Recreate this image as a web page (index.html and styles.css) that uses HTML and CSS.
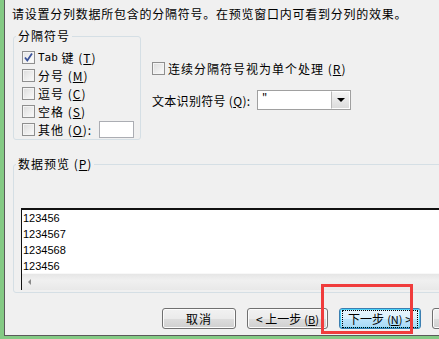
FILE: index.html
```html
<!DOCTYPE html>
<html lang="zh-CN">
<head>
    <meta charset="UTF-8">
    <title>文本分列向导</title>
    <link rel="stylesheet" href="styles.css">
</head>
<body>
    <div class="frame">
        <div class="panel">
            <p class="intro">请设置分列数据所包含的分隔符号。在预览窗口内可看到分列的效果。</p>

            <div class="options">
                <fieldset class="group">
                    <legend>分隔符号</legend>
                    <div class="checks">
                        <label class="check"><span class="box checked"><svg width="11" height="11" viewBox="0 0 11 11"><path d="M2 5.5 L4.3 8.5 L9 1.5" fill="none" stroke="#3b539a" stroke-width="1.8"/></svg></span><span class="mono">Tab</span>&nbsp;键 (<u>T</u>)</label>
                        <label class="check"><span class="box"></span>分号 (<u>M</u>)</label>
                        <label class="check"><span class="box"></span>逗号 (<u>C</u>)</label>
                        <label class="check"><span class="box"></span>空格 (<u>S</u>)</label>
                        <label class="check"><span class="box"></span>其他 (<u>O</u>):<span class="other-input"></span></label>
                    </div>
                </fieldset>

                <div class="side">
                    <label class="check"><span class="box"></span>连续分隔符号视为单个处理 (<u>R</u>)</label>
                    <div class="qualifier">
                        <span class="qualifier-label">文本识别符号 (<u>Q</u>):</span>
                        <div class="combo">
                            <span class="combo-value">"</span>
                            <span class="combo-btn"><span class="arrow"></span></span>
                        </div>
                    </div>
                </div>
            </div>

            <fieldset class="preview">
                <legend>数据预览 (<u>P</u>)</legend>
                <div class="list">
                    <div class="rows">
                        <div class="row">123456</div>
                        <div class="row">1234567</div>
                        <div class="row">1234568</div>
                        <div class="row">123456</div>
                    </div>
                    <div class="hscroll"><span class="left-arrow"></span></div>
                </div>
            </fieldset>

            <div class="buttons">
                <button class="btn btn-cancel">取消</button>
                <button class="btn btn-back">&lt; 上一步<span class="key">(<u>B</u>)</span></button>
                <button class="btn btn-next focused"><span class="focus-rect">下一步<span class="key">(<u>N</u>)</span> &gt;</span></button>
                <button class="btn btn-finish"></button>
            </div>
        </div>
        <div class="highlight"></div>
    </div>
</body>
</html>
```

FILE: styles.css
```css
* {
    box-sizing: border-box;
}

body {
    margin: 0;
    font-family: "Noto Sans CJK SC", "DejaVu Sans", sans-serif;
    font-size: 12px;
    letter-spacing: 1px;
    color: #000;
    background: #f0f0f0;
}

.frame {
    position: relative;
    width: 439px;
    height: 339px;
    border-left: 4px solid #84ca84;
    border-bottom: 3px solid #84ca84;
    overflow: hidden;
}

.panel {
    height: 100%;
    background: #f0f0f0;
    border-left: 1px solid #5a5a5a;
    border-bottom: 1px solid #5a5a5a;
    overflow: hidden;
}

.intro {
    margin: 0;
    padding: 6px 0 0 7px;
    line-height: 16px;
    letter-spacing: 0.75px;
    white-space: nowrap;
}

u {
    text-decoration: underline;
    text-underline-offset: 1px;
}

.options {
    display: flex;
    margin-top: 7px;
}

fieldset {
    margin: 0;
    border: 1px solid #d5dfe5;
    border-radius: 3px;
    padding: 0 2px;
}

legend {
    padding: 0 2px;
    line-height: 14px;
}

.group {
    margin-left: 8px;
    width: 128px;
}

.checks {
    padding: 5px 0 1px 6px;
}

.check {
    display: flex;
    align-items: center;
    height: 18px;
    white-space: nowrap;
}

.box {
    display: inline-flex;
    align-items: center;
    justify-content: center;
    width: 13px;
    height: 13px;
    margin-right: 3px;
    border: 1px solid #8f8f8f;
    background: linear-gradient(135deg, #dcdcdc, #fbfbfb);
    box-shadow: inset 0 0 0 1px #f4f4f4;
    flex-shrink: 0;
}

.box.checked {
    background: linear-gradient(135deg, #e4e4e4, #ffffff);
}

.mono {
    font-family: "DejaVu Sans Mono", monospace;
    font-size: 11px;
    letter-spacing: 0;
}

.other-input {
    display: inline-block;
    width: 35px;
    height: 17px;
    margin-left: auto;
    margin-right: 4px;
    background: #fff;
    border: 1px solid #abadb3;
}

.side {
    margin-left: 11px;
    padding-top: 30px;
}

.qualifier {
    display: flex;
    align-items: center;
    margin-top: 13px;
}

.qualifier-label {
    width: 105px;
    letter-spacing: 0.3px;
    white-space: nowrap;
}

.combo {
    display: flex;
    width: 94px;
    height: 20px;
    border: 1px solid #a0a0a0;
    background: #fff;
}

.combo-value {
    flex: 1;
    padding-left: 4px;
    line-height: 14px;
    font-size: 11px;
}

.combo-btn {
    display: flex;
    align-items: center;
    justify-content: center;
    width: 19px;
    border: 1px solid #fff;
    border-left: 1px solid #b8b8b8;
    background: linear-gradient(#f4f4f4, #dcdcdc);
}

.arrow {
    width: 0;
    height: 0;
    border-left: 4px solid transparent;
    border-right: 4px solid transparent;
    border-top: 4px solid #000;
}

.preview {
    margin: 17px 0 0 8px;
    width: 480px;
    padding: 37px 0 2px 7px;
}

.preview legend {
    margin-left: -5px;
}

.list {
    background: #fff;
    border-top: 2px solid #111;
    border-left: 1px solid #111;
}

.rows {
    height: 63px;
    overflow: hidden;
}

.row {
    height: 16px;
    line-height: 16px;
    padding-left: 1px;
    font-family: "Liberation Sans", sans-serif;
    font-size: 11px;
    letter-spacing: 0;
}

.hscroll {
    display: flex;
    align-items: center;
    height: 17px;
    padding-left: 6px;
    background: linear-gradient(#e6e6e6, #f0f0f0 40%, #e8e8e8);
    border-top: 1px solid #f8f8f8;
}

.left-arrow {
    width: 0;
    height: 0;
    border-top: 3px solid transparent;
    border-bottom: 3px solid transparent;
    border-right: 3px solid #8a8a8a;
}

.buttons {
    display: flex;
    gap: 11px;
    margin-top: 15px;
    padding-left: 157px;
}

.btn {
    flex-shrink: 0;
    height: 21px;
    padding: 0;
    font-family: inherit;
    font-size: 12px;
    letter-spacing: 0;
    color: #000;
    border: 1px solid #707070;
    border-radius: 3px;
    background: linear-gradient(#f2f2f2 0%, #ebebeb 50%, #dddddd 51%, #cfcfcf 100%);
    box-shadow: inset 0 0 0 1px #fcfcfc;
    white-space: nowrap;
}

.key {
    margin-left: 3px;
    font-size: 11px;
}

.btn-cancel {
    width: 74px;
    letter-spacing: 1px;
}

.btn-back {
    width: 81px;
}

.btn-next {
    width: 82px;
}

.btn-finish {
    width: 75px;
}

.btn.focused {
    border-color: #3c7fb1;
    box-shadow: inset 0 0 0 1px #48d1f8;
    background: linear-gradient(#eaf6fd 0%, #d9f0fc 50%, #bee6fd 51%, #a7d9f5 100%);
}

.focus-rect {
    display: block;
    margin: 0 2px;
    line-height: 13px;
    padding: 1px 0;
    border: 1px dotted #000;
}

.highlight {
    position: absolute;
    left: 317px;
    top: 284px;
    width: 92px;
    height: 50px;
    border: 3px solid #f03c3c;
}
```
